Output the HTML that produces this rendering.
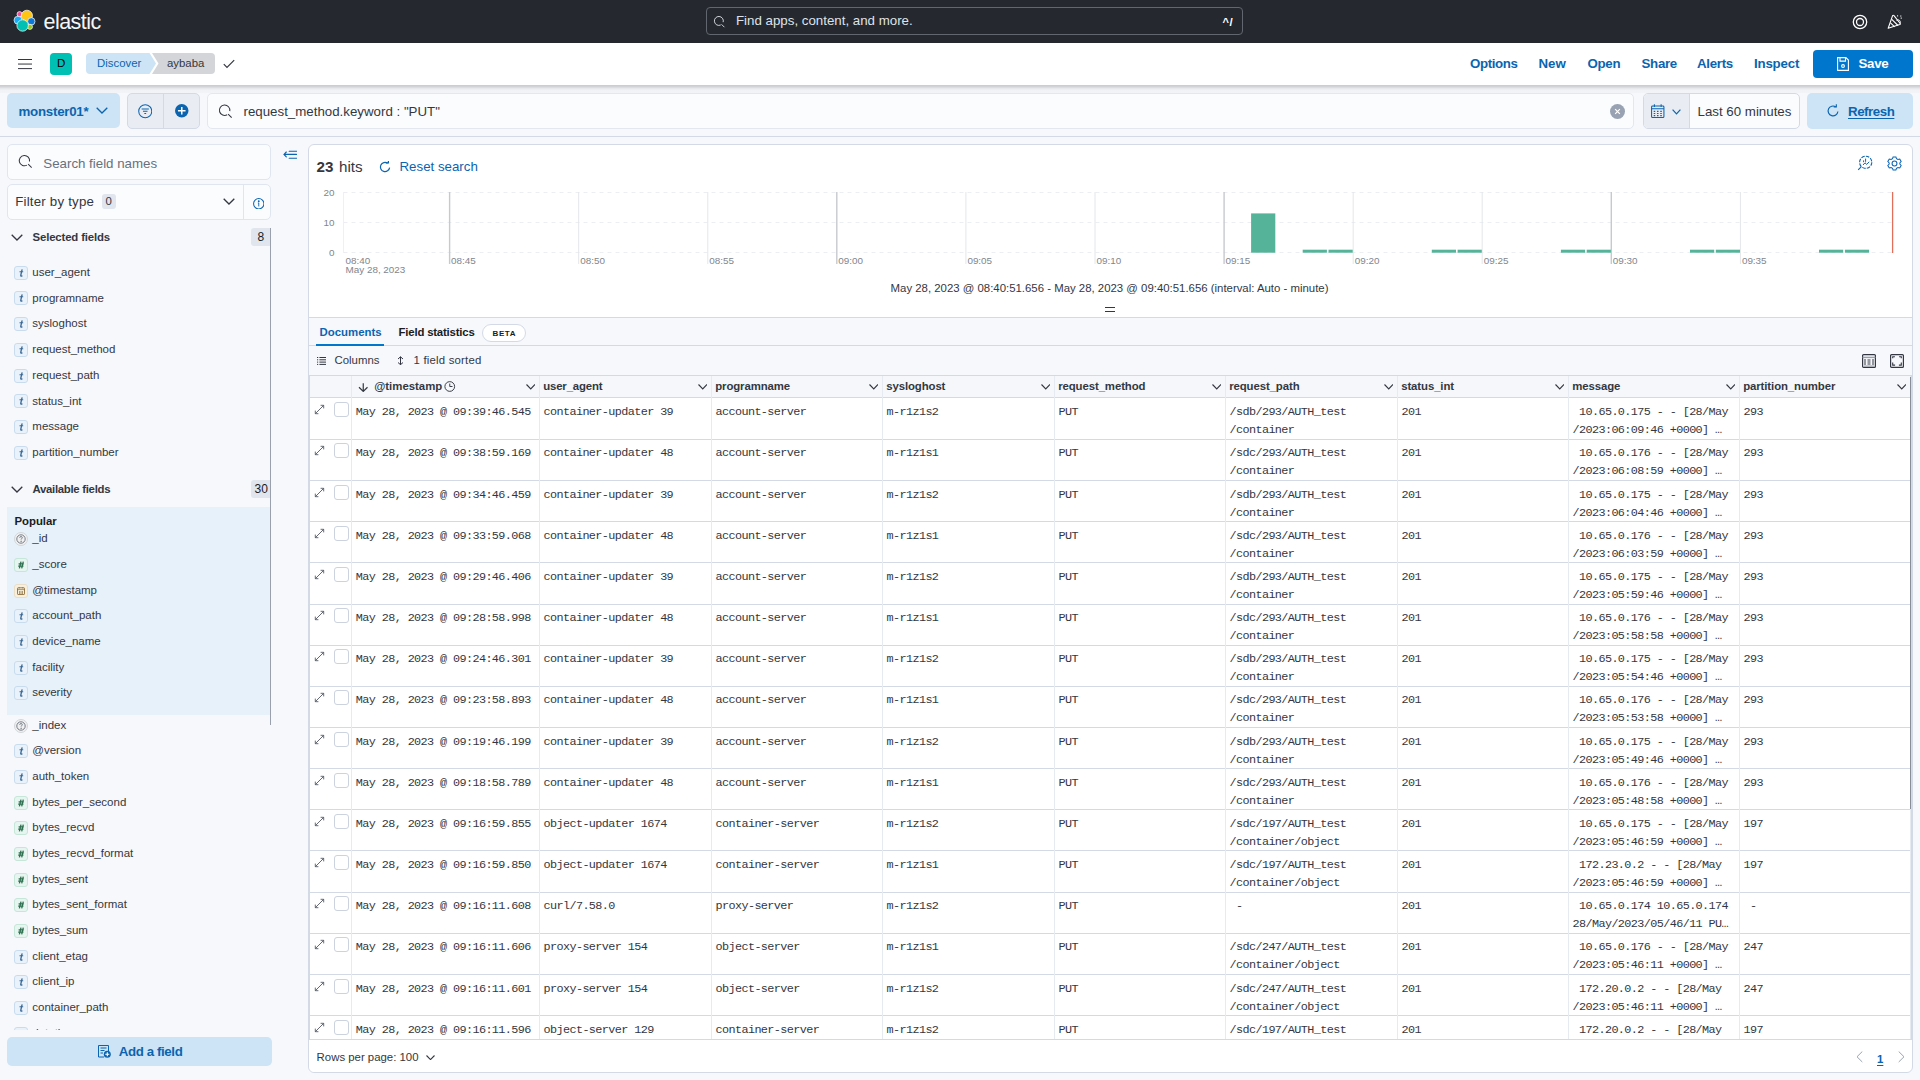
<!DOCTYPE html><html><head><meta charset="utf-8"><style>
*{box-sizing:border-box;margin:0;padding:0}
html,body{width:1920px;height:1080px;overflow:hidden;background:#f7f8fc;font-family:"Liberation Sans",sans-serif;color:#343741}
.a{position:absolute}
.t{line-height:20px;white-space:pre}
.tok{position:absolute;width:14px;height:14px;border-radius:3px;border:1px solid #c9dcee;background:#e9f2fb}
.tokn{border-color:#c5e6d8;background:#e6f5ef}
.toku{border-radius:50%;border-color:#d3d6da;background:#f0f0f0}
.tokd{border-color:#eadfc6;background:#f8f0dc}
</style></head><body>
<div class="a" style="left:0;top:0;width:1920px;height:43px;background:#25282f"></div>
<svg class="a" style="left:13px;top:9px" width="24" height="24" viewBox="0 0 24 24" stroke="#fff" stroke-width=".7">
<circle cx="6.6" cy="5.2" r="2.6" fill="#f04e98"/>
<circle cx="13.9" cy="6.8" r="5.6" fill="#fec514"/>
<circle cx="5" cy="11.2" r="4" fill="#1ba9f5"/>
<circle cx="18.3" cy="12.4" r="3.7" fill="#0b77d6"/>
<circle cx="16.9" cy="17.8" r="2.6" fill="#93c90e"/>
<circle cx="9.6" cy="16.5" r="5.7" fill="#00bfb3"/>
</svg>
<div class="a t" style="left:43.5px;top:12px;font-size:21.5px;color:#f5f6f8;letter-spacing:-0.55px">elastic</div>
<div class="a" style="left:706px;top:7px;width:537px;height:28px;border:1px solid #62666e;border-radius:4px"></div>
<svg class="a" style="left:713px;top:15px" width="13" height="13" viewBox="0 0 16 16" fill="none" stroke="#d4d7dc" stroke-width="1.2"><path d="M9.5 12.3A5.5 5.5 0 1 1 12.5 8.8"/><path d="M10.5 11.5l3.5 3.5"/></svg>
<div class="a t" style="left:736px;top:11px;font-size:13.3px;color:#dfe3e9">Find apps, content, and more.</div>
<div class="a t" style="left:1222.5px;top:12px;font-size:11px;color:#fff;font-weight:bold">^</div>
<div class="a t" style="left:1229.5px;top:12px;font-size:11.5px;color:#fff;font-weight:bold">/</div>
<svg class="a" style="left:1851.5px;top:13.5px" width="16" height="16" viewBox="0 0 16 16" fill="none" stroke="#fff"><circle cx="8" cy="8" r="6.7" stroke-width="1.3"/><circle cx="8" cy="8" r="3.5" stroke-width="1.3"/><path d="M5.6 2.2v2.4M10.4 2.2v2.4M5.6 11.4v2.4M10.4 11.4v2.4" stroke="#25282f" stroke-width="0"/></svg>
<svg class="a" style="left:1887px;top:13.5px" width="16" height="16" viewBox="0 0 16 16" fill="none" stroke="#fff" stroke-width="1.1" stroke-linejoin="round"><path d="M1.2 14.3L5.6 1.6Q6.3.9 7 1.6L13.2 9.5Q13.6 10.3 12.8 10.6Z"/><path d="M3.5 8.8l4.2 4.1M4.8 5.3l6.2 6.2"/><path d="M9.5 6.5Q11.5 5 12.8 6.6Q14 8.2 13 9.6" stroke-width=".9"/><path d="M10.6 1.2v1.3M13.8 1.4v1.3M13.6 4.1h1.4" stroke-width=".9"/></svg>
<div class="a" style="left:0;top:43px;width:1920px;height:42px;background:#fff"></div>
<div class="a" style="left:0;top:85px;width:1920px;height:8px;background:linear-gradient(#c9cdd9 0px,#c9cdd9 1px,#d2d3d6 1px,#d2d3d6 2px,#dcdde1 2px,#dcdde1 3px,#e7e8ec 3px,#e7e8ec 4px,#edeef2 4px,#edeef2 5px,#f1f2f6 5px,#f3f4f8 8px)"></div>
<div class="a" style="left:18px;top:58.8px;width:14px;height:1.6px;background:#343741;box-shadow:0 4.55px 0 #343741,0 9.1px 0 #343741"></div>
<div class="a" style="left:50px;top:53px;width:22px;height:22px;border-radius:4px;background:#00bfb3"></div>
<div class="a t" style="left:57px;top:53px;font-size:11.5px;color:#000">D</div>
<svg class="a" style="left:86px;top:53px" width="130" height="21" viewBox="0 0 130 21">
<path d="M4 0 H63.5 L70 10.5 L63.5 21 H4 Q0 21 0 17 V4 Q0 0 4 0Z" fill="#cce4f5"/>
<path d="M66 0 H125 Q129 0 129 4 V17 Q129 21 125 21 H66 L72.5 10.5Z" fill="#d3d5d8"/>
</svg>
<div class="a t" style="left:97px;top:53px;font-size:11.4px;color:#0b64b0">Discover</div>
<div class="a t" style="left:167px;top:53px;font-size:11.4px;color:#343741">aybaba</div>
<svg class="a" style="left:223px;top:59px" width="12" height="10" viewBox="0 0 12 10"><path d="M.8 5.2L4 8.5 11.2 1.2" fill="none" stroke="#343741" stroke-width="1.2"/></svg>
<div class="a t" style="left:1470px;top:54px;font-size:13.3px;color:#0b64b0;font-weight:bold;letter-spacing:-0.4px">Options</div>
<div class="a t" style="left:1538.5px;top:54px;font-size:13.3px;color:#0b64b0;font-weight:bold">New</div>
<div class="a t" style="left:1587.5px;top:54px;font-size:13.3px;color:#0b64b0;font-weight:bold;letter-spacing:-0.3px">Open</div>
<div class="a t" style="left:1641.5px;top:54px;font-size:13.3px;color:#0b64b0;font-weight:bold;letter-spacing:-0.3px">Share</div>
<div class="a t" style="left:1697px;top:54px;font-size:13.3px;color:#0b64b0;font-weight:bold;letter-spacing:-0.3px">Alerts</div>
<div class="a t" style="left:1754px;top:54px;font-size:13.3px;color:#0b64b0;font-weight:bold;letter-spacing:-0.2px">Inspect</div>
<div class="a" style="left:1813px;top:50px;width:100px;height:28px;border-radius:4px;background:#0077cc"></div>
<svg class="a" style="left:1837px;top:57px" width="12" height="14" viewBox="0 0 12 14" fill="none" stroke="#fff" stroke-width="1.1"><path d="M.6.6h8.3l2.5 2.5v10.3H.6z"/><path d="M3 .6v3.5h5.5V.6"/><circle cx="6" cy="9" r="1.4"/></svg>
<div class="a t" style="left:1858.5px;top:54px;font-size:13.3px;color:#fff;font-weight:bold;letter-spacing:-0.3px">Save</div>
<div class="a" style="left:0;top:136px;width:1920px;height:1px;background:#d3dae6"></div>
<div class="a" style="left:7px;top:93px;width:113px;height:35px;border-radius:5px;background:#cce4f5"></div>
<div class="a t" style="left:18.5px;top:102px;font-size:13.3px;color:#0b64b0;font-weight:bold;letter-spacing:-0.25px">monster01*</div>
<svg class="a" style="left:96px;top:107px" width="12" height="7" viewBox="0 0 12 7"><path d="M.7.7L6 6 11.3.7" fill="none" stroke="#0b64b0" stroke-width="1.3"/></svg>
<div class="a" style="left:127px;top:93px;width:73px;height:35.5px;border-radius:5px;background:#e9edf3;border:1px solid #d3dae6"></div>
<div class="a" style="left:163px;top:94px;width:1px;height:34px;background:#d3dae6"></div>
<svg class="a" style="left:137.5px;top:104px" width="14.5" height="14.5" viewBox="0 0 16 16" fill="none" stroke="#0b64b0" stroke-width="1.15"><circle cx="8" cy="8" r="7.2"/><path d="M4 5.5h8M5.5 8h5M7 10.5h2"/></svg>
<svg class="a" style="left:175px;top:104px" width="13.5" height="13.5" viewBox="0 0 16 16"><circle cx="8" cy="8" r="8" fill="#0b64b0"/><path d="M8 3.5v9M3.5 8h9" stroke="#fff" stroke-width="1.8"/></svg>
<div class="a" style="left:207px;top:93px;width:1427px;height:35.5px;border-radius:5px;background:#fbfcfd;border:1px solid #e3e8f0"></div>
<svg class="a" style="left:217.5px;top:104px" width="15" height="14" viewBox="0 0 16 15" fill="none" stroke="#343741" stroke-width="1.15"><path d="M9.8 11.6A5.6 5.6 0 1 1 12.6 7.6"/><path d="M10.8 10.8l3.8 3.8"/></svg>
<div class="a t" style="left:243.5px;top:102px;font-size:13.3px;color:#343741">request_method.keyword : &quot;PUT&quot;</div>
<svg class="a" style="left:1609.5px;top:103.5px" width="15" height="15" viewBox="0 0 16 16"><circle cx="8" cy="8" r="8" fill="#98a2b3"/><path d="M5.5 5.5l5 5M10.5 5.5l-5 5" stroke="#fff" stroke-width="1.3"/></svg>
<div class="a" style="left:1643px;top:93px;width:157px;height:35.5px;border-radius:5px;background:#fbfcfd;border:1px solid #d3dae6;overflow:hidden"><div style="position:absolute;left:0;top:0;width:46px;height:35px;background:#e9edf3;border-right:1px solid #d3dae6"></div></div>
<svg class="a" style="left:1651px;top:104px" width="13.5" height="14" viewBox="0 0 14 14.5" fill="none" stroke="#0b64b0" stroke-width="1.1"><rect x=".6" y="2" width="12.8" height="12" rx="1"/><path d="M.6 5h12.8M3.5 .2v3M10.5 .2v3"/><path d="M2.8 7.6h1.6M6.2 7.6h1.6M9.6 7.6h1.6M2.8 9.8h1.6M6.2 9.8h1.6M9.6 9.8h1.6M2.8 12h1.6M6.2 12h1.6M9.6 12h1.6" stroke-width="1.2"/></svg>
<svg class="a" style="left:1672px;top:109px" width="9" height="6" viewBox="0 0 9 6"><path d="M.6.6L4.5 4.8 8.4.6" fill="none" stroke="#0b64b0" stroke-width="1.2"/></svg>
<div class="a t" style="left:1697.5px;top:102px;font-size:13.3px;color:#343741">Last 60 minutes</div>
<div class="a" style="left:1807px;top:93px;width:106px;height:35.5px;border-radius:5px;background:#cce4f5"></div>
<svg class="a" style="left:1826px;top:104px" width="14" height="14" viewBox="0 0 16 16" fill="none" stroke="#0b64b0" stroke-width="1.3"><path d="M13.6 8.5A5.6 5.6 0 1 1 11.2 3.3"/><path d="M8.8 3.3h3V0.3"/></svg>
<div class="a t" style="left:1848px;top:102px;font-size:13.3px;color:#0b64b0;font-weight:bold;letter-spacing:-0.45px;text-decoration:underline;text-underline-offset:1.5px">Refresh</div>
<div class="a" style="left:7px;top:144px;width:264px;height:35.5px;border-radius:5px;background:#fbfcfd;border:1px solid #e0e6ef"></div>
<svg class="a" style="left:17.5px;top:154px" width="14.5" height="14.5" viewBox="0 0 16 16" fill="none" stroke="#343741" stroke-width="1.15"><path d="M9.9 12.3A5.7 5.7 0 1 1 12.7 8.3"/><path d="M11.2 11.2l3.9 3.9"/></svg>
<div class="a t" style="left:43.3px;top:154px;font-size:13.3px;color:#69707d">Search field names</div>
<div class="a" style="left:7px;top:184px;width:264px;height:36px;border-radius:5px;background:#fbfcfd;border:1px solid #e0e6ef"></div>
<div class="a" style="left:243px;top:185px;width:1px;height:34px;background:#e0e6ef"></div>
<div class="a t" style="left:15.2px;top:192px;font-size:13.3px;color:#343741;letter-spacing:0.2px">Filter by type</div>
<div class="a" style="left:102px;top:194px;width:14px;height:15px;border-radius:3px;background:#e0e5ee"></div>
<div class="a t" style="left:105.5px;top:191px;font-size:11.4px;color:#343741">0</div>
<svg class="a" style="left:223px;top:198px" width="12" height="7" viewBox="0 0 12 7"><path d="M.7.7L6 6 11.3.7" fill="none" stroke="#343741" stroke-width="1.3"/></svg>
<svg class="a" style="left:252.5px;top:197.5px" width="11.5" height="11.5" viewBox="0 0 12 12" fill="none" stroke="#0b64b0" stroke-width="1.05"><circle cx="6" cy="6" r="5.4"/><path d="M6 5.2v3.6M5.1 5.2H6" stroke-width=".95"/><circle cx="6" cy="3.4" r=".45" fill="#0b64b0"/></svg>
<svg class="a" style="left:11px;top:234.2px" width="12" height="7" viewBox="0 0 12 7"><path d="M.7.7L6 6 11.3.7" fill="none" stroke="#343741" stroke-width="1.3"/></svg>
<div class="a t" style="left:32.5px;top:227px;font-size:11.4px;color:#343741;font-weight:bold;letter-spacing:-0.15px">Selected fields</div>
<div class="a" style="left:251px;top:228.2px;width:20px;height:17.5px;border-radius:3px 0 0 3px;background:#e0e5ee"></div>
<div class="a t" style="left:257.5px;top:227px;font-size:12px;color:#1a1c21">8</div>
<div class="tok" style="left:14px;top:265.7px"></div>
<svg class="a" style="left:14px;top:265.7px" width="14" height="14" viewBox="0 0 14 14" fill="none" stroke="#3b6a98" stroke-linecap="round"><path d="M8 3.9L6.8 9.1Q6.5 10.4 7.9 10" stroke-width="1.35"/><path d="M5.9 5.8h2.9" stroke-width="1.1"/></svg>
<div class="a t" style="left:32.3px;top:262px;font-size:11.5px;color:#343741">user_agent</div>
<div class="tok" style="left:14px;top:291.4px"></div>
<svg class="a" style="left:14px;top:291.4px" width="14" height="14" viewBox="0 0 14 14" fill="none" stroke="#3b6a98" stroke-linecap="round"><path d="M8 3.9L6.8 9.1Q6.5 10.4 7.9 10" stroke-width="1.35"/><path d="M5.9 5.8h2.9" stroke-width="1.1"/></svg>
<div class="a t" style="left:32.3px;top:288px;font-size:11.5px;color:#343741">programname</div>
<div class="tok" style="left:14px;top:317.2px"></div>
<svg class="a" style="left:14px;top:317.2px" width="14" height="14" viewBox="0 0 14 14" fill="none" stroke="#3b6a98" stroke-linecap="round"><path d="M8 3.9L6.8 9.1Q6.5 10.4 7.9 10" stroke-width="1.35"/><path d="M5.9 5.8h2.9" stroke-width="1.1"/></svg>
<div class="a t" style="left:32.3px;top:313px;font-size:11.5px;color:#343741">sysloghost</div>
<div class="tok" style="left:14px;top:342.9px"></div>
<svg class="a" style="left:14px;top:342.9px" width="14" height="14" viewBox="0 0 14 14" fill="none" stroke="#3b6a98" stroke-linecap="round"><path d="M8 3.9L6.8 9.1Q6.5 10.4 7.9 10" stroke-width="1.35"/><path d="M5.9 5.8h2.9" stroke-width="1.1"/></svg>
<div class="a t" style="left:32.3px;top:339px;font-size:11.5px;color:#343741">request_method</div>
<div class="tok" style="left:14px;top:368.7px"></div>
<svg class="a" style="left:14px;top:368.7px" width="14" height="14" viewBox="0 0 14 14" fill="none" stroke="#3b6a98" stroke-linecap="round"><path d="M8 3.9L6.8 9.1Q6.5 10.4 7.9 10" stroke-width="1.35"/><path d="M5.9 5.8h2.9" stroke-width="1.1"/></svg>
<div class="a t" style="left:32.3px;top:365px;font-size:11.5px;color:#343741">request_path</div>
<div class="tok" style="left:14px;top:394.4px"></div>
<svg class="a" style="left:14px;top:394.4px" width="14" height="14" viewBox="0 0 14 14" fill="none" stroke="#3b6a98" stroke-linecap="round"><path d="M8 3.9L6.8 9.1Q6.5 10.4 7.9 10" stroke-width="1.35"/><path d="M5.9 5.8h2.9" stroke-width="1.1"/></svg>
<div class="a t" style="left:32.3px;top:391px;font-size:11.5px;color:#343741">status_int</div>
<div class="tok" style="left:14px;top:420.2px"></div>
<svg class="a" style="left:14px;top:420.2px" width="14" height="14" viewBox="0 0 14 14" fill="none" stroke="#3b6a98" stroke-linecap="round"><path d="M8 3.9L6.8 9.1Q6.5 10.4 7.9 10" stroke-width="1.35"/><path d="M5.9 5.8h2.9" stroke-width="1.1"/></svg>
<div class="a t" style="left:32.3px;top:416px;font-size:11.5px;color:#343741">message</div>
<div class="tok" style="left:14px;top:445.9px"></div>
<svg class="a" style="left:14px;top:445.9px" width="14" height="14" viewBox="0 0 14 14" fill="none" stroke="#3b6a98" stroke-linecap="round"><path d="M8 3.9L6.8 9.1Q6.5 10.4 7.9 10" stroke-width="1.35"/><path d="M5.9 5.8h2.9" stroke-width="1.1"/></svg>
<div class="a t" style="left:32.3px;top:442px;font-size:11.5px;color:#343741">partition_number</div>
<svg class="a" style="left:11px;top:486.4px" width="12" height="7" viewBox="0 0 12 7"><path d="M.7.7L6 6 11.3.7" fill="none" stroke="#343741" stroke-width="1.3"/></svg>
<div class="a t" style="left:32.5px;top:479px;font-size:11.4px;color:#343741;font-weight:bold;letter-spacing:-0.3px">Available fields</div>
<div class="a" style="left:251px;top:480.4px;width:20px;height:17.5px;border-radius:3px 0 0 3px;background:#e0e5ee"></div>
<div class="a t" style="left:254.5px;top:479px;font-size:12px;color:#1a1c21">30</div>
<div class="a" style="left:7.2px;top:507.3px;width:262.8px;height:207.5px;background:#e6f1fa"></div>
<div class="a t" style="left:14.4px;top:511px;font-size:11.4px;color:#1a1c21;font-weight:bold">Popular</div>
<div class="tok toku" style="left:14px;top:532.1px"></div>
<svg class="a" style="left:14px;top:532.1px" width="14" height="14" viewBox="0 0 14 14" fill="none" stroke="#69707d" stroke-width=".9"><circle cx="7" cy="7" r="4.2"/><path d="M5.7 5.8c0-.8.6-1.3 1.3-1.3s1.3.5 1.3 1.2c0 .9-1.2 1-1.2 1.9"/><circle cx="7.1" cy="9.2" r=".3" fill="#69707d"/></svg>
<div class="a t" style="left:32.3px;top:528px;font-size:11.5px;color:#343741">_id</div>
<div class="tok tokn" style="left:14px;top:557.8px"></div>
<svg class="a" style="left:14px;top:557.8px" width="14" height="14" viewBox="0 0 14 14" fill="none" stroke="#2c7050" stroke-width="1.3"><path d="M7 3.6L5.4 10.4M9.3 3.6L7.7 10.4M4.6 5.9h5.2M4.2 8.2h5.2"/></svg>
<div class="a t" style="left:32.3px;top:554px;font-size:11.5px;color:#343741">_score</div>
<div class="tok tokd" style="left:14px;top:583.5px"></div>
<svg class="a" style="left:14px;top:583.5px" width="14" height="14" viewBox="0 0 14 14" fill="none" stroke="#8d6e3c" stroke-width=".9"><rect x="3.5" y="3.8" width="7" height="6.7" rx=".6"/><path d="M3.5 5.6h7M5.2 3v1.5M8.8 3v1.5M5.5 7v3M7 7v3M8.5 7v3" stroke-width=".7"/></svg>
<div class="a t" style="left:32.3px;top:580px;font-size:11.5px;color:#343741">@timestamp</div>
<div class="tok" style="left:14px;top:609.2px"></div>
<svg class="a" style="left:14px;top:609.2px" width="14" height="14" viewBox="0 0 14 14" fill="none" stroke="#3b6a98" stroke-linecap="round"><path d="M8 3.9L6.8 9.1Q6.5 10.4 7.9 10" stroke-width="1.35"/><path d="M5.9 5.8h2.9" stroke-width="1.1"/></svg>
<div class="a t" style="left:32.3px;top:605px;font-size:11.5px;color:#343741">account_path</div>
<div class="tok" style="left:14px;top:634.9px"></div>
<svg class="a" style="left:14px;top:634.9px" width="14" height="14" viewBox="0 0 14 14" fill="none" stroke="#3b6a98" stroke-linecap="round"><path d="M8 3.9L6.8 9.1Q6.5 10.4 7.9 10" stroke-width="1.35"/><path d="M5.9 5.8h2.9" stroke-width="1.1"/></svg>
<div class="a t" style="left:32.3px;top:631px;font-size:11.5px;color:#343741">device_name</div>
<div class="tok" style="left:14px;top:660.6px"></div>
<svg class="a" style="left:14px;top:660.6px" width="14" height="14" viewBox="0 0 14 14" fill="none" stroke="#3b6a98" stroke-linecap="round"><path d="M8 3.9L6.8 9.1Q6.5 10.4 7.9 10" stroke-width="1.35"/><path d="M5.9 5.8h2.9" stroke-width="1.1"/></svg>
<div class="a t" style="left:32.3px;top:657px;font-size:11.5px;color:#343741">facility</div>
<div class="tok" style="left:14px;top:686.3px"></div>
<svg class="a" style="left:14px;top:686.3px" width="14" height="14" viewBox="0 0 14 14" fill="none" stroke="#3b6a98" stroke-linecap="round"><path d="M8 3.9L6.8 9.1Q6.5 10.4 7.9 10" stroke-width="1.35"/><path d="M5.9 5.8h2.9" stroke-width="1.1"/></svg>
<div class="a t" style="left:32.3px;top:682px;font-size:11.5px;color:#343741">severity</div>
<div class="tok toku" style="left:14px;top:718.7px"></div>
<svg class="a" style="left:14px;top:718.7px" width="14" height="14" viewBox="0 0 14 14" fill="none" stroke="#69707d" stroke-width=".9"><circle cx="7" cy="7" r="4.2"/><path d="M5.7 5.8c0-.8.6-1.3 1.3-1.3s1.3.5 1.3 1.2c0 .9-1.2 1-1.2 1.9"/><circle cx="7.1" cy="9.2" r=".3" fill="#69707d"/></svg>
<div class="a t" style="left:32.3px;top:715px;font-size:11.5px;color:#343741">_index</div>
<div class="tok" style="left:14px;top:744.3px"></div>
<svg class="a" style="left:14px;top:744.3px" width="14" height="14" viewBox="0 0 14 14" fill="none" stroke="#3b6a98" stroke-linecap="round"><path d="M8 3.9L6.8 9.1Q6.5 10.4 7.9 10" stroke-width="1.35"/><path d="M5.9 5.8h2.9" stroke-width="1.1"/></svg>
<div class="a t" style="left:32.3px;top:740px;font-size:11.5px;color:#343741">@version</div>
<div class="tok" style="left:14px;top:770.0px"></div>
<svg class="a" style="left:14px;top:770.0px" width="14" height="14" viewBox="0 0 14 14" fill="none" stroke="#3b6a98" stroke-linecap="round"><path d="M8 3.9L6.8 9.1Q6.5 10.4 7.9 10" stroke-width="1.35"/><path d="M5.9 5.8h2.9" stroke-width="1.1"/></svg>
<div class="a t" style="left:32.3px;top:766px;font-size:11.5px;color:#343741">auth_token</div>
<div class="tok tokn" style="left:14px;top:795.6px"></div>
<svg class="a" style="left:14px;top:795.6px" width="14" height="14" viewBox="0 0 14 14" fill="none" stroke="#2c7050" stroke-width="1.3"><path d="M7 3.6L5.4 10.4M9.3 3.6L7.7 10.4M4.6 5.9h5.2M4.2 8.2h5.2"/></svg>
<div class="a t" style="left:32.3px;top:792px;font-size:11.5px;color:#343741">bytes_per_second</div>
<div class="tok tokn" style="left:14px;top:821.3px"></div>
<svg class="a" style="left:14px;top:821.3px" width="14" height="14" viewBox="0 0 14 14" fill="none" stroke="#2c7050" stroke-width="1.3"><path d="M7 3.6L5.4 10.4M9.3 3.6L7.7 10.4M4.6 5.9h5.2M4.2 8.2h5.2"/></svg>
<div class="a t" style="left:32.3px;top:817px;font-size:11.5px;color:#343741">bytes_recvd</div>
<div class="tok tokn" style="left:14px;top:846.9px"></div>
<svg class="a" style="left:14px;top:846.9px" width="14" height="14" viewBox="0 0 14 14" fill="none" stroke="#2c7050" stroke-width="1.3"><path d="M7 3.6L5.4 10.4M9.3 3.6L7.7 10.4M4.6 5.9h5.2M4.2 8.2h5.2"/></svg>
<div class="a t" style="left:32.3px;top:843px;font-size:11.5px;color:#343741">bytes_recvd_format</div>
<div class="tok tokn" style="left:14px;top:872.6px"></div>
<svg class="a" style="left:14px;top:872.6px" width="14" height="14" viewBox="0 0 14 14" fill="none" stroke="#2c7050" stroke-width="1.3"><path d="M7 3.6L5.4 10.4M9.3 3.6L7.7 10.4M4.6 5.9h5.2M4.2 8.2h5.2"/></svg>
<div class="a t" style="left:32.3px;top:869px;font-size:11.5px;color:#343741">bytes_sent</div>
<div class="tok tokn" style="left:14px;top:898.2px"></div>
<svg class="a" style="left:14px;top:898.2px" width="14" height="14" viewBox="0 0 14 14" fill="none" stroke="#2c7050" stroke-width="1.3"><path d="M7 3.6L5.4 10.4M9.3 3.6L7.7 10.4M4.6 5.9h5.2M4.2 8.2h5.2"/></svg>
<div class="a t" style="left:32.3px;top:894px;font-size:11.5px;color:#343741">bytes_sent_format</div>
<div class="tok tokn" style="left:14px;top:923.9px"></div>
<svg class="a" style="left:14px;top:923.9px" width="14" height="14" viewBox="0 0 14 14" fill="none" stroke="#2c7050" stroke-width="1.3"><path d="M7 3.6L5.4 10.4M9.3 3.6L7.7 10.4M4.6 5.9h5.2M4.2 8.2h5.2"/></svg>
<div class="a t" style="left:32.3px;top:920px;font-size:11.5px;color:#343741">bytes_sum</div>
<div class="tok" style="left:14px;top:949.5px"></div>
<svg class="a" style="left:14px;top:949.5px" width="14" height="14" viewBox="0 0 14 14" fill="none" stroke="#3b6a98" stroke-linecap="round"><path d="M8 3.9L6.8 9.1Q6.5 10.4 7.9 10" stroke-width="1.35"/><path d="M5.9 5.8h2.9" stroke-width="1.1"/></svg>
<div class="a t" style="left:32.3px;top:946px;font-size:11.5px;color:#343741">client_etag</div>
<div class="tok" style="left:14px;top:975.2px"></div>
<svg class="a" style="left:14px;top:975.2px" width="14" height="14" viewBox="0 0 14 14" fill="none" stroke="#3b6a98" stroke-linecap="round"><path d="M8 3.9L6.8 9.1Q6.5 10.4 7.9 10" stroke-width="1.35"/><path d="M5.9 5.8h2.9" stroke-width="1.1"/></svg>
<div class="a t" style="left:32.3px;top:971px;font-size:11.5px;color:#343741">client_ip</div>
<div class="tok" style="left:14px;top:1000.8px"></div>
<svg class="a" style="left:14px;top:1000.8px" width="14" height="14" viewBox="0 0 14 14" fill="none" stroke="#3b6a98" stroke-linecap="round"><path d="M8 3.9L6.8 9.1Q6.5 10.4 7.9 10" stroke-width="1.35"/><path d="M5.9 5.8h2.9" stroke-width="1.1"/></svg>
<div class="a t" style="left:32.3px;top:997px;font-size:11.5px;color:#343741">container_path</div>
<div class="tok" style="left:14px;top:1026.5px"></div>
<svg class="a" style="left:14px;top:1026.5px" width="14" height="14" viewBox="0 0 14 14" fill="none" stroke="#3b6a98" stroke-linecap="round"><path d="M8 3.9L6.8 9.1Q6.5 10.4 7.9 10" stroke-width="1.35"/><path d="M5.9 5.8h2.9" stroke-width="1.1"/></svg>
<div class="a t" style="left:32.3px;top:1023px;font-size:11.5px;color:#343741">datetime</div>
<div class="a" style="left:270px;top:228px;width:1px;height:497px;background:#9aa1ac"></div>
<div class="a" style="left:0;top:1030px;width:300px;height:50px;background:#f7f8fc"></div>
<div class="a" style="left:7.2px;top:1037.2px;width:264.5px;height:28.5px;border-radius:5px;background:#cce4f5"></div>
<svg class="a" style="left:98px;top:1045px" width="13" height="13" viewBox="0 0 13 13"><path d="M.5.5h10v5.5M.5.5v11.5h5.5" fill="none" stroke="#0b64b0" stroke-width="1"/><path d="M2.5 3h6M2.5 5.5h4M2.5 8h2.5" stroke="#0b64b0" stroke-width="1.1"/><circle cx="9.3" cy="9.3" r="3.5" fill="#0b64b0"/><path d="M9.3 7.3v4M7.3 9.3h4" stroke="#fff" stroke-width="1.1"/></svg>
<div class="a t" style="left:118.8px;top:1042px;font-size:13.3px;color:#0b64b0;font-weight:bold;letter-spacing:-0.4px">Add a field</div>
<svg class="a" style="left:283px;top:150px" width="14" height="10" viewBox="0 0 14 10" fill="none" stroke="#0b64b0" stroke-width="1.15" stroke-linecap="round"><path d="M3.3 2L1 4.4l2.3 2.4M1 4.4h12.5M6.2 1.2h7.3M6.2 8.2h7.3"/></svg>
<div class="a" style="left:308px;top:144px;width:1605px;height:929px;border:1px solid #d3dae6;border-radius:6px;background:#fff"></div>
<div class="a t" style="left:316.5px;top:157px;font-size:15.2px;color:#343741;font-weight:bold">23</div>
<div class="a t" style="left:339px;top:157px;font-size:15.2px;color:#343741">hits</div>
<svg class="a" style="left:378.5px;top:161px" width="12" height="12" viewBox="0 0 12 12" fill="none" stroke="#0b64b0" stroke-width="1.2"><path d="M10.6 6.6A4.6 4.6 0 1 1 8.6 2.2"/><path d="M6.8 1.8h2.6V-.8"/></svg>
<div class="a t" style="left:399.5px;top:157px;font-size:13.3px;color:#0b64b0">Reset search</div>
<svg class="a" style="left:1857px;top:155px" width="16" height="16" viewBox="0 0 16 16" fill="none" stroke="#0b64b0" stroke-width="1.1"><circle cx="8.7" cy="7.3" r="6.1" stroke-dasharray="3.5 1.2"/><path d="M4.3 11.7L1.2 14.8"/><path d="M6 10l2-2.2 1.7 1.6 2.5-2.6M6.6 7.2V5.4M8.6 6.8V3.6" stroke-width="1"/></svg>
<svg class="a" style="left:1886.5px;top:155.5px" width="15" height="15" viewBox="0 0 16 16" fill="none" stroke="#0b64b0" stroke-width="1.1"><circle cx="8" cy="8" r="2.6"/><path d="M6.5 1h3l.6 1.9 1.6.9 1.9-.5 1.5 2.6-1.4 1.4v1.4l1.4 1.4-1.5 2.6-1.9-.5-1.6.9L9.5 15h-3l-.6-1.9-1.6-.9-1.9.5L.9 10.1l1.4-1.4V7.3L.9 5.9l1.5-2.6 1.9.5 1.6-.9z"/></svg>
<svg class="a" style="left:0;top:0" width="1920" height="300" viewBox="0 0 1920 300" font-family="Liberation Sans"><line x1="343.5" y1="192.5" x2="1893" y2="192.5" stroke="#eceef1" stroke-width="1" stroke-dasharray="4 4"/><line x1="343.5" y1="222.5" x2="1893" y2="222.5" stroke="#eceef1" stroke-width="1" stroke-dasharray="4 4"/><line x1="343.5" y1="252.5" x2="1893" y2="252.5" stroke="#eceef1" stroke-width="1" stroke-dasharray="4 4"/><line x1="343.5" y1="192" x2="343.5" y2="253" stroke="#eef0f3" stroke-width="1"/><line x1="449.6" y1="192" x2="449.6" y2="264" stroke="#c6c9ce" stroke-width="1.4"/><text x="451.1" y="264.2" font-size="9.9" fill="#81868e">08:45</text><line x1="578.7" y1="192" x2="578.7" y2="264" stroke="#e4e6e9" stroke-width="1"/><text x="580.2" y="264.2" font-size="9.9" fill="#81868e">08:50</text><line x1="707.8" y1="192" x2="707.8" y2="264" stroke="#e4e6e9" stroke-width="1"/><text x="709.3" y="264.2" font-size="9.9" fill="#81868e">08:55</text><line x1="836.8" y1="192" x2="836.8" y2="264" stroke="#c6c9ce" stroke-width="1.4"/><text x="838.3" y="264.2" font-size="9.9" fill="#81868e">09:00</text><line x1="965.9" y1="192" x2="965.9" y2="264" stroke="#e4e6e9" stroke-width="1"/><text x="967.4" y="264.2" font-size="9.9" fill="#81868e">09:05</text><line x1="1095.0" y1="192" x2="1095.0" y2="264" stroke="#e4e6e9" stroke-width="1"/><text x="1096.5" y="264.2" font-size="9.9" fill="#81868e">09:10</text><line x1="1224.1" y1="192" x2="1224.1" y2="264" stroke="#c6c9ce" stroke-width="1.4"/><text x="1225.6" y="264.2" font-size="9.9" fill="#81868e">09:15</text><line x1="1353.2" y1="192" x2="1353.2" y2="264" stroke="#e4e6e9" stroke-width="1"/><text x="1354.7" y="264.2" font-size="9.9" fill="#81868e">09:20</text><line x1="1482.2" y1="192" x2="1482.2" y2="264" stroke="#e4e6e9" stroke-width="1"/><text x="1483.7" y="264.2" font-size="9.9" fill="#81868e">09:25</text><line x1="1611.3" y1="192" x2="1611.3" y2="264" stroke="#c6c9ce" stroke-width="1.4"/><text x="1612.8" y="264.2" font-size="9.9" fill="#81868e">09:30</text><line x1="1740.4" y1="192" x2="1740.4" y2="264" stroke="#e4e6e9" stroke-width="1"/><text x="1741.9" y="264.2" font-size="9.9" fill="#81868e">09:35</text><text x="345.5" y="264.2" font-size="9.9" fill="#81868e">08:40</text><text x="345.5" y="273" font-size="9.9" fill="#81868e">May 28, 2023</text><text x="334.5" y="195.5" text-anchor="end" font-size="9.9" fill="#81868e">20</text><text x="334.5" y="225.7" text-anchor="end" font-size="9.9" fill="#81868e">10</text><text x="334.5" y="256.2" text-anchor="end" font-size="9.9" fill="#81868e">0</text><rect x="1251.1" y="213.4" width="24.2" height="39.3" fill="#54b399"/><rect x="1302.7" y="249.7" width="24.2" height="3.0" fill="#54b399"/><rect x="1328.5" y="249.7" width="24.2" height="3.0" fill="#54b399"/><rect x="1431.8" y="249.7" width="24.2" height="3.0" fill="#54b399"/><rect x="1457.6" y="249.7" width="24.2" height="3.0" fill="#54b399"/><rect x="1560.9" y="249.7" width="24.2" height="3.0" fill="#54b399"/><rect x="1586.7" y="249.7" width="24.2" height="3.0" fill="#54b399"/><rect x="1690.0" y="249.7" width="24.2" height="3.0" fill="#54b399"/><rect x="1715.8" y="249.7" width="24.2" height="3.0" fill="#54b399"/><rect x="1819.0" y="249.7" width="24.2" height="3.0" fill="#54b399"/><rect x="1844.9" y="249.7" width="24.2" height="3.0" fill="#54b399"/><line x1="1892.6" y1="192" x2="1892.6" y2="253" stroke="#e0705a" stroke-width="1.3"/></svg>
<div class="a t" style="left:890.6px;top:278px;font-size:11.4px;color:#343741">May 28, 2023 @ 08:40:51.656 - May 28, 2023 @ 09:40:51.656 (interval: Auto - minute)</div>
<div class="a" style="left:1105px;top:307px;width:10px;height:1.2px;background:#343741;box-shadow:0 4px 0 #343741"></div>
<div class="a" style="left:309px;top:317px;width:1603px;height:58px;background:#f7f8fc;border-top:1px solid #d3dae6"></div>
<div class="a" style="left:309px;top:345px;width:1603px;height:1px;background:#d3dae6"></div>
<div class="a" style="left:316px;top:344px;width:68px;height:2px;background:#0077cc"></div>
<div class="a t" style="left:319.6px;top:322px;font-size:11.4px;color:#0b64b0;font-weight:bold">Documents</div>
<div class="a t" style="left:398.6px;top:322px;font-size:11.4px;color:#1a1c21;font-weight:bold;letter-spacing:-0.2px">Field statistics</div>
<div class="a" style="left:481.7px;top:324.4px;width:44.3px;height:17.5px;border:1px solid #d3dae6;border-radius:9px;background:#fff"></div>
<div class="a t" style="left:492.5px;top:324px;font-size:8px;color:#1a1c21;font-weight:bold;letter-spacing:0.6px">BETA</div>
<svg class="a" style="left:317px;top:356.5px" width="9" height="8" viewBox="0 0 9 8" fill="#343741"><rect x="0" y="0" width="1.2" height="1"/><rect x="2.4" y="0" width="6.6" height="1"/><rect x="0" y="2.3" width="1.2" height="1"/><rect x="2.4" y="2.3" width="6.6" height="1"/><rect x="0" y="4.6" width="1.2" height="1"/><rect x="2.4" y="4.6" width="6.6" height="1"/><rect x="0" y="6.9" width="1.2" height="1"/><rect x="2.4" y="6.9" width="6.6" height="1"/></svg>
<div class="a t" style="left:334.5px;top:350px;font-size:11.4px;color:#343741">Columns</div>
<svg class="a" style="left:396.5px;top:355.5px" width="7" height="9.5" viewBox="0 0 7 9.5" fill="none" stroke="#343741" stroke-width="1"><path d="M3.5.8v8M1 3L3.5.8 6 3M1 6.5l2.5 2.2L6 6.5"/></svg>
<div class="a t" style="left:413.5px;top:350px;font-size:11.4px;color:#343741;letter-spacing:0.2px">1 field sorted</div>
<svg class="a" style="left:1862px;top:354px" width="14" height="14" viewBox="0 0 14 14" fill="none" stroke="#343741"><rect x=".6" y=".6" width="12.8" height="12.8" rx="1" stroke-width="1.2"/><path d="M.6 3.4h12.8" stroke="#9aa0a8" stroke-width="1.4"/><path d="M2 6h2M5.5 6h3M10 6h2M2 8h2M5.5 8h3M10 8h2M2 10h2M5.5 10h3M10 10h2" stroke-width="1"/><path d="M2 12h10" stroke="#9aa0a8"/></svg>
<svg class="a" style="left:1890px;top:354px" width="14" height="14" viewBox="0 0 14 14" fill="none" stroke="#343741"><rect x=".6" y=".6" width="12.8" height="12.8" rx="1" stroke-width="1.2"/><path d="M2.7 4.3V2.7h2.2M9.1 2.7h2.2v1.6M11.3 8.5v2.6H8.9M5.1 11.1H2.7V8.5" stroke-width="1.1"/></svg>
<div class="a" style="left:309px;top:375px;width:1603px;height:23px;background:#f5f7fa;border-top:1px solid #d3dae6;border-bottom:1px solid #d3dae6"></div>
<div class="a" style="left:309.5px;top:439.0px;width:1601.0px;height:1px;background:#d3dae6"></div>
<svg class="a" style="left:314px;top:404.0px" width="11" height="11" viewBox="0 0 11 11" fill="none" stroke="#535966" stroke-width=".9"><path d="M1.3 9.7L9.7 1.3M6.6 1.3h3.1v3.1M1.3 6.6v3.1h3.1"/></svg>
<div class="a" style="left:334px;top:402.2px;width:14.5px;height:14.5px;border:1px solid #ccd3de;border-radius:3px;background:#fff"></div>
<div class="a t" style="left:355.8px;top:402px;font-size:11.8px;color:#343741;letter-spacing:-0.6px;font-family:Liberation Mono,monospace">May 28, 2023 @ 09:39:46.545</div>
<div class="a t" style="left:543.5px;top:402px;font-size:11.8px;color:#343741;letter-spacing:-0.6px;font-family:Liberation Mono,monospace">container-updater 39</div>
<div class="a t" style="left:715.5px;top:402px;font-size:11.8px;color:#343741;letter-spacing:-0.6px;font-family:Liberation Mono,monospace">account-server</div>
<div class="a t" style="left:886.5px;top:402px;font-size:11.8px;color:#343741;letter-spacing:-0.6px;font-family:Liberation Mono,monospace">m-r1z1s2</div>
<div class="a t" style="left:1058.5px;top:402px;font-size:11.8px;color:#343741;letter-spacing:-0.6px;font-family:Liberation Mono,monospace">PUT</div>
<div class="a t" style="left:1229.5px;top:402px;font-size:11.8px;color:#343741;letter-spacing:-0.6px;font-family:Liberation Mono,monospace">/sdb/293/AUTH_test</div>
<div class="a t" style="left:1229.5px;top:420px;font-size:11.8px;color:#343741;letter-spacing:-0.6px;font-family:Liberation Mono,monospace">/container</div>
<div class="a t" style="left:1401.5px;top:402px;font-size:11.8px;color:#343741;letter-spacing:-0.6px;font-family:Liberation Mono,monospace">201</div>
<div class="a t" style="left:1572.5px;top:402px;font-size:11.8px;color:#343741;letter-spacing:-0.6px;font-family:Liberation Mono,monospace"> 10.65.0.175 - - [28/May</div>
<div class="a t" style="left:1572.5px;top:420px;font-size:11.8px;color:#343741;letter-spacing:-0.6px;font-family:Liberation Mono,monospace">/2023:06:09:46 +0000] …</div>
<div class="a t" style="left:1743.5px;top:402px;font-size:11.8px;color:#343741;letter-spacing:-0.6px;font-family:Liberation Mono,monospace">293</div>
<div class="a" style="left:309.5px;top:480.0px;width:1601.0px;height:1px;background:#d3dae6"></div>
<svg class="a" style="left:314px;top:445.0px" width="11" height="11" viewBox="0 0 11 11" fill="none" stroke="#535966" stroke-width=".9"><path d="M1.3 9.7L9.7 1.3M6.6 1.3h3.1v3.1M1.3 6.6v3.1h3.1"/></svg>
<div class="a" style="left:334px;top:443.2px;width:14.5px;height:14.5px;border:1px solid #ccd3de;border-radius:3px;background:#fff"></div>
<div class="a t" style="left:355.8px;top:443px;font-size:11.8px;color:#343741;letter-spacing:-0.6px;font-family:Liberation Mono,monospace">May 28, 2023 @ 09:38:59.169</div>
<div class="a t" style="left:543.5px;top:443px;font-size:11.8px;color:#343741;letter-spacing:-0.6px;font-family:Liberation Mono,monospace">container-updater 48</div>
<div class="a t" style="left:715.5px;top:443px;font-size:11.8px;color:#343741;letter-spacing:-0.6px;font-family:Liberation Mono,monospace">account-server</div>
<div class="a t" style="left:886.5px;top:443px;font-size:11.8px;color:#343741;letter-spacing:-0.6px;font-family:Liberation Mono,monospace">m-r1z1s1</div>
<div class="a t" style="left:1058.5px;top:443px;font-size:11.8px;color:#343741;letter-spacing:-0.6px;font-family:Liberation Mono,monospace">PUT</div>
<div class="a t" style="left:1229.5px;top:443px;font-size:11.8px;color:#343741;letter-spacing:-0.6px;font-family:Liberation Mono,monospace">/sdc/293/AUTH_test</div>
<div class="a t" style="left:1229.5px;top:461px;font-size:11.8px;color:#343741;letter-spacing:-0.6px;font-family:Liberation Mono,monospace">/container</div>
<div class="a t" style="left:1401.5px;top:443px;font-size:11.8px;color:#343741;letter-spacing:-0.6px;font-family:Liberation Mono,monospace">201</div>
<div class="a t" style="left:1572.5px;top:443px;font-size:11.8px;color:#343741;letter-spacing:-0.6px;font-family:Liberation Mono,monospace"> 10.65.0.176 - - [28/May</div>
<div class="a t" style="left:1572.5px;top:461px;font-size:11.8px;color:#343741;letter-spacing:-0.6px;font-family:Liberation Mono,monospace">/2023:06:08:59 +0000] …</div>
<div class="a t" style="left:1743.5px;top:443px;font-size:11.8px;color:#343741;letter-spacing:-0.6px;font-family:Liberation Mono,monospace">293</div>
<div class="a" style="left:309.5px;top:521.0px;width:1601.0px;height:1px;background:#d3dae6"></div>
<svg class="a" style="left:314px;top:487.0px" width="11" height="11" viewBox="0 0 11 11" fill="none" stroke="#535966" stroke-width=".9"><path d="M1.3 9.7L9.7 1.3M6.6 1.3h3.1v3.1M1.3 6.6v3.1h3.1"/></svg>
<div class="a" style="left:334px;top:485.2px;width:14.5px;height:14.5px;border:1px solid #ccd3de;border-radius:3px;background:#fff"></div>
<div class="a t" style="left:355.8px;top:485px;font-size:11.8px;color:#343741;letter-spacing:-0.6px;font-family:Liberation Mono,monospace">May 28, 2023 @ 09:34:46.459</div>
<div class="a t" style="left:543.5px;top:485px;font-size:11.8px;color:#343741;letter-spacing:-0.6px;font-family:Liberation Mono,monospace">container-updater 39</div>
<div class="a t" style="left:715.5px;top:485px;font-size:11.8px;color:#343741;letter-spacing:-0.6px;font-family:Liberation Mono,monospace">account-server</div>
<div class="a t" style="left:886.5px;top:485px;font-size:11.8px;color:#343741;letter-spacing:-0.6px;font-family:Liberation Mono,monospace">m-r1z1s2</div>
<div class="a t" style="left:1058.5px;top:485px;font-size:11.8px;color:#343741;letter-spacing:-0.6px;font-family:Liberation Mono,monospace">PUT</div>
<div class="a t" style="left:1229.5px;top:485px;font-size:11.8px;color:#343741;letter-spacing:-0.6px;font-family:Liberation Mono,monospace">/sdb/293/AUTH_test</div>
<div class="a t" style="left:1229.5px;top:503px;font-size:11.8px;color:#343741;letter-spacing:-0.6px;font-family:Liberation Mono,monospace">/container</div>
<div class="a t" style="left:1401.5px;top:485px;font-size:11.8px;color:#343741;letter-spacing:-0.6px;font-family:Liberation Mono,monospace">201</div>
<div class="a t" style="left:1572.5px;top:485px;font-size:11.8px;color:#343741;letter-spacing:-0.6px;font-family:Liberation Mono,monospace"> 10.65.0.175 - - [28/May</div>
<div class="a t" style="left:1572.5px;top:503px;font-size:11.8px;color:#343741;letter-spacing:-0.6px;font-family:Liberation Mono,monospace">/2023:06:04:46 +0000] …</div>
<div class="a t" style="left:1743.5px;top:485px;font-size:11.8px;color:#343741;letter-spacing:-0.6px;font-family:Liberation Mono,monospace">293</div>
<div class="a" style="left:309.5px;top:562.0px;width:1601.0px;height:1px;background:#d3dae6"></div>
<svg class="a" style="left:314px;top:528.0px" width="11" height="11" viewBox="0 0 11 11" fill="none" stroke="#535966" stroke-width=".9"><path d="M1.3 9.7L9.7 1.3M6.6 1.3h3.1v3.1M1.3 6.6v3.1h3.1"/></svg>
<div class="a" style="left:334px;top:526.2px;width:14.5px;height:14.5px;border:1px solid #ccd3de;border-radius:3px;background:#fff"></div>
<div class="a t" style="left:355.8px;top:526px;font-size:11.8px;color:#343741;letter-spacing:-0.6px;font-family:Liberation Mono,monospace">May 28, 2023 @ 09:33:59.068</div>
<div class="a t" style="left:543.5px;top:526px;font-size:11.8px;color:#343741;letter-spacing:-0.6px;font-family:Liberation Mono,monospace">container-updater 48</div>
<div class="a t" style="left:715.5px;top:526px;font-size:11.8px;color:#343741;letter-spacing:-0.6px;font-family:Liberation Mono,monospace">account-server</div>
<div class="a t" style="left:886.5px;top:526px;font-size:11.8px;color:#343741;letter-spacing:-0.6px;font-family:Liberation Mono,monospace">m-r1z1s1</div>
<div class="a t" style="left:1058.5px;top:526px;font-size:11.8px;color:#343741;letter-spacing:-0.6px;font-family:Liberation Mono,monospace">PUT</div>
<div class="a t" style="left:1229.5px;top:526px;font-size:11.8px;color:#343741;letter-spacing:-0.6px;font-family:Liberation Mono,monospace">/sdc/293/AUTH_test</div>
<div class="a t" style="left:1229.5px;top:544px;font-size:11.8px;color:#343741;letter-spacing:-0.6px;font-family:Liberation Mono,monospace">/container</div>
<div class="a t" style="left:1401.5px;top:526px;font-size:11.8px;color:#343741;letter-spacing:-0.6px;font-family:Liberation Mono,monospace">201</div>
<div class="a t" style="left:1572.5px;top:526px;font-size:11.8px;color:#343741;letter-spacing:-0.6px;font-family:Liberation Mono,monospace"> 10.65.0.176 - - [28/May</div>
<div class="a t" style="left:1572.5px;top:544px;font-size:11.8px;color:#343741;letter-spacing:-0.6px;font-family:Liberation Mono,monospace">/2023:06:03:59 +0000] …</div>
<div class="a t" style="left:1743.5px;top:526px;font-size:11.8px;color:#343741;letter-spacing:-0.6px;font-family:Liberation Mono,monospace">293</div>
<div class="a" style="left:309.5px;top:604.0px;width:1601.0px;height:1px;background:#d3dae6"></div>
<svg class="a" style="left:314px;top:569.0px" width="11" height="11" viewBox="0 0 11 11" fill="none" stroke="#535966" stroke-width=".9"><path d="M1.3 9.7L9.7 1.3M6.6 1.3h3.1v3.1M1.3 6.6v3.1h3.1"/></svg>
<div class="a" style="left:334px;top:567.2px;width:14.5px;height:14.5px;border:1px solid #ccd3de;border-radius:3px;background:#fff"></div>
<div class="a t" style="left:355.8px;top:567px;font-size:11.8px;color:#343741;letter-spacing:-0.6px;font-family:Liberation Mono,monospace">May 28, 2023 @ 09:29:46.406</div>
<div class="a t" style="left:543.5px;top:567px;font-size:11.8px;color:#343741;letter-spacing:-0.6px;font-family:Liberation Mono,monospace">container-updater 39</div>
<div class="a t" style="left:715.5px;top:567px;font-size:11.8px;color:#343741;letter-spacing:-0.6px;font-family:Liberation Mono,monospace">account-server</div>
<div class="a t" style="left:886.5px;top:567px;font-size:11.8px;color:#343741;letter-spacing:-0.6px;font-family:Liberation Mono,monospace">m-r1z1s2</div>
<div class="a t" style="left:1058.5px;top:567px;font-size:11.8px;color:#343741;letter-spacing:-0.6px;font-family:Liberation Mono,monospace">PUT</div>
<div class="a t" style="left:1229.5px;top:567px;font-size:11.8px;color:#343741;letter-spacing:-0.6px;font-family:Liberation Mono,monospace">/sdb/293/AUTH_test</div>
<div class="a t" style="left:1229.5px;top:585px;font-size:11.8px;color:#343741;letter-spacing:-0.6px;font-family:Liberation Mono,monospace">/container</div>
<div class="a t" style="left:1401.5px;top:567px;font-size:11.8px;color:#343741;letter-spacing:-0.6px;font-family:Liberation Mono,monospace">201</div>
<div class="a t" style="left:1572.5px;top:567px;font-size:11.8px;color:#343741;letter-spacing:-0.6px;font-family:Liberation Mono,monospace"> 10.65.0.175 - - [28/May</div>
<div class="a t" style="left:1572.5px;top:585px;font-size:11.8px;color:#343741;letter-spacing:-0.6px;font-family:Liberation Mono,monospace">/2023:05:59:46 +0000] …</div>
<div class="a t" style="left:1743.5px;top:567px;font-size:11.8px;color:#343741;letter-spacing:-0.6px;font-family:Liberation Mono,monospace">293</div>
<div class="a" style="left:309.5px;top:645.0px;width:1601.0px;height:1px;background:#d3dae6"></div>
<svg class="a" style="left:314px;top:610.0px" width="11" height="11" viewBox="0 0 11 11" fill="none" stroke="#535966" stroke-width=".9"><path d="M1.3 9.7L9.7 1.3M6.6 1.3h3.1v3.1M1.3 6.6v3.1h3.1"/></svg>
<div class="a" style="left:334px;top:608.2px;width:14.5px;height:14.5px;border:1px solid #ccd3de;border-radius:3px;background:#fff"></div>
<div class="a t" style="left:355.8px;top:608px;font-size:11.8px;color:#343741;letter-spacing:-0.6px;font-family:Liberation Mono,monospace">May 28, 2023 @ 09:28:58.998</div>
<div class="a t" style="left:543.5px;top:608px;font-size:11.8px;color:#343741;letter-spacing:-0.6px;font-family:Liberation Mono,monospace">container-updater 48</div>
<div class="a t" style="left:715.5px;top:608px;font-size:11.8px;color:#343741;letter-spacing:-0.6px;font-family:Liberation Mono,monospace">account-server</div>
<div class="a t" style="left:886.5px;top:608px;font-size:11.8px;color:#343741;letter-spacing:-0.6px;font-family:Liberation Mono,monospace">m-r1z1s1</div>
<div class="a t" style="left:1058.5px;top:608px;font-size:11.8px;color:#343741;letter-spacing:-0.6px;font-family:Liberation Mono,monospace">PUT</div>
<div class="a t" style="left:1229.5px;top:608px;font-size:11.8px;color:#343741;letter-spacing:-0.6px;font-family:Liberation Mono,monospace">/sdc/293/AUTH_test</div>
<div class="a t" style="left:1229.5px;top:626px;font-size:11.8px;color:#343741;letter-spacing:-0.6px;font-family:Liberation Mono,monospace">/container</div>
<div class="a t" style="left:1401.5px;top:608px;font-size:11.8px;color:#343741;letter-spacing:-0.6px;font-family:Liberation Mono,monospace">201</div>
<div class="a t" style="left:1572.5px;top:608px;font-size:11.8px;color:#343741;letter-spacing:-0.6px;font-family:Liberation Mono,monospace"> 10.65.0.176 - - [28/May</div>
<div class="a t" style="left:1572.5px;top:626px;font-size:11.8px;color:#343741;letter-spacing:-0.6px;font-family:Liberation Mono,monospace">/2023:05:58:58 +0000] …</div>
<div class="a t" style="left:1743.5px;top:608px;font-size:11.8px;color:#343741;letter-spacing:-0.6px;font-family:Liberation Mono,monospace">293</div>
<div class="a" style="left:309.5px;top:686.0px;width:1601.0px;height:1px;background:#d3dae6"></div>
<svg class="a" style="left:314px;top:651.0px" width="11" height="11" viewBox="0 0 11 11" fill="none" stroke="#535966" stroke-width=".9"><path d="M1.3 9.7L9.7 1.3M6.6 1.3h3.1v3.1M1.3 6.6v3.1h3.1"/></svg>
<div class="a" style="left:334px;top:649.2px;width:14.5px;height:14.5px;border:1px solid #ccd3de;border-radius:3px;background:#fff"></div>
<div class="a t" style="left:355.8px;top:649px;font-size:11.8px;color:#343741;letter-spacing:-0.6px;font-family:Liberation Mono,monospace">May 28, 2023 @ 09:24:46.301</div>
<div class="a t" style="left:543.5px;top:649px;font-size:11.8px;color:#343741;letter-spacing:-0.6px;font-family:Liberation Mono,monospace">container-updater 39</div>
<div class="a t" style="left:715.5px;top:649px;font-size:11.8px;color:#343741;letter-spacing:-0.6px;font-family:Liberation Mono,monospace">account-server</div>
<div class="a t" style="left:886.5px;top:649px;font-size:11.8px;color:#343741;letter-spacing:-0.6px;font-family:Liberation Mono,monospace">m-r1z1s2</div>
<div class="a t" style="left:1058.5px;top:649px;font-size:11.8px;color:#343741;letter-spacing:-0.6px;font-family:Liberation Mono,monospace">PUT</div>
<div class="a t" style="left:1229.5px;top:649px;font-size:11.8px;color:#343741;letter-spacing:-0.6px;font-family:Liberation Mono,monospace">/sdb/293/AUTH_test</div>
<div class="a t" style="left:1229.5px;top:667px;font-size:11.8px;color:#343741;letter-spacing:-0.6px;font-family:Liberation Mono,monospace">/container</div>
<div class="a t" style="left:1401.5px;top:649px;font-size:11.8px;color:#343741;letter-spacing:-0.6px;font-family:Liberation Mono,monospace">201</div>
<div class="a t" style="left:1572.5px;top:649px;font-size:11.8px;color:#343741;letter-spacing:-0.6px;font-family:Liberation Mono,monospace"> 10.65.0.175 - - [28/May</div>
<div class="a t" style="left:1572.5px;top:667px;font-size:11.8px;color:#343741;letter-spacing:-0.6px;font-family:Liberation Mono,monospace">/2023:05:54:46 +0000] …</div>
<div class="a t" style="left:1743.5px;top:649px;font-size:11.8px;color:#343741;letter-spacing:-0.6px;font-family:Liberation Mono,monospace">293</div>
<div class="a" style="left:309.5px;top:727.0px;width:1601.0px;height:1px;background:#d3dae6"></div>
<svg class="a" style="left:314px;top:692.0px" width="11" height="11" viewBox="0 0 11 11" fill="none" stroke="#535966" stroke-width=".9"><path d="M1.3 9.7L9.7 1.3M6.6 1.3h3.1v3.1M1.3 6.6v3.1h3.1"/></svg>
<div class="a" style="left:334px;top:690.2px;width:14.5px;height:14.5px;border:1px solid #ccd3de;border-radius:3px;background:#fff"></div>
<div class="a t" style="left:355.8px;top:690px;font-size:11.8px;color:#343741;letter-spacing:-0.6px;font-family:Liberation Mono,monospace">May 28, 2023 @ 09:23:58.893</div>
<div class="a t" style="left:543.5px;top:690px;font-size:11.8px;color:#343741;letter-spacing:-0.6px;font-family:Liberation Mono,monospace">container-updater 48</div>
<div class="a t" style="left:715.5px;top:690px;font-size:11.8px;color:#343741;letter-spacing:-0.6px;font-family:Liberation Mono,monospace">account-server</div>
<div class="a t" style="left:886.5px;top:690px;font-size:11.8px;color:#343741;letter-spacing:-0.6px;font-family:Liberation Mono,monospace">m-r1z1s1</div>
<div class="a t" style="left:1058.5px;top:690px;font-size:11.8px;color:#343741;letter-spacing:-0.6px;font-family:Liberation Mono,monospace">PUT</div>
<div class="a t" style="left:1229.5px;top:690px;font-size:11.8px;color:#343741;letter-spacing:-0.6px;font-family:Liberation Mono,monospace">/sdc/293/AUTH_test</div>
<div class="a t" style="left:1229.5px;top:708px;font-size:11.8px;color:#343741;letter-spacing:-0.6px;font-family:Liberation Mono,monospace">/container</div>
<div class="a t" style="left:1401.5px;top:690px;font-size:11.8px;color:#343741;letter-spacing:-0.6px;font-family:Liberation Mono,monospace">201</div>
<div class="a t" style="left:1572.5px;top:690px;font-size:11.8px;color:#343741;letter-spacing:-0.6px;font-family:Liberation Mono,monospace"> 10.65.0.176 - - [28/May</div>
<div class="a t" style="left:1572.5px;top:708px;font-size:11.8px;color:#343741;letter-spacing:-0.6px;font-family:Liberation Mono,monospace">/2023:05:53:58 +0000] …</div>
<div class="a t" style="left:1743.5px;top:690px;font-size:11.8px;color:#343741;letter-spacing:-0.6px;font-family:Liberation Mono,monospace">293</div>
<div class="a" style="left:309.5px;top:768.0px;width:1601.0px;height:1px;background:#d3dae6"></div>
<svg class="a" style="left:314px;top:734.0px" width="11" height="11" viewBox="0 0 11 11" fill="none" stroke="#535966" stroke-width=".9"><path d="M1.3 9.7L9.7 1.3M6.6 1.3h3.1v3.1M1.3 6.6v3.1h3.1"/></svg>
<div class="a" style="left:334px;top:732.2px;width:14.5px;height:14.5px;border:1px solid #ccd3de;border-radius:3px;background:#fff"></div>
<div class="a t" style="left:355.8px;top:732px;font-size:11.8px;color:#343741;letter-spacing:-0.6px;font-family:Liberation Mono,monospace">May 28, 2023 @ 09:19:46.199</div>
<div class="a t" style="left:543.5px;top:732px;font-size:11.8px;color:#343741;letter-spacing:-0.6px;font-family:Liberation Mono,monospace">container-updater 39</div>
<div class="a t" style="left:715.5px;top:732px;font-size:11.8px;color:#343741;letter-spacing:-0.6px;font-family:Liberation Mono,monospace">account-server</div>
<div class="a t" style="left:886.5px;top:732px;font-size:11.8px;color:#343741;letter-spacing:-0.6px;font-family:Liberation Mono,monospace">m-r1z1s2</div>
<div class="a t" style="left:1058.5px;top:732px;font-size:11.8px;color:#343741;letter-spacing:-0.6px;font-family:Liberation Mono,monospace">PUT</div>
<div class="a t" style="left:1229.5px;top:732px;font-size:11.8px;color:#343741;letter-spacing:-0.6px;font-family:Liberation Mono,monospace">/sdb/293/AUTH_test</div>
<div class="a t" style="left:1229.5px;top:750px;font-size:11.8px;color:#343741;letter-spacing:-0.6px;font-family:Liberation Mono,monospace">/container</div>
<div class="a t" style="left:1401.5px;top:732px;font-size:11.8px;color:#343741;letter-spacing:-0.6px;font-family:Liberation Mono,monospace">201</div>
<div class="a t" style="left:1572.5px;top:732px;font-size:11.8px;color:#343741;letter-spacing:-0.6px;font-family:Liberation Mono,monospace"> 10.65.0.175 - - [28/May</div>
<div class="a t" style="left:1572.5px;top:750px;font-size:11.8px;color:#343741;letter-spacing:-0.6px;font-family:Liberation Mono,monospace">/2023:05:49:46 +0000] …</div>
<div class="a t" style="left:1743.5px;top:732px;font-size:11.8px;color:#343741;letter-spacing:-0.6px;font-family:Liberation Mono,monospace">293</div>
<div class="a" style="left:309.5px;top:809.0px;width:1601.0px;height:1px;background:#d3dae6"></div>
<svg class="a" style="left:314px;top:775.0px" width="11" height="11" viewBox="0 0 11 11" fill="none" stroke="#535966" stroke-width=".9"><path d="M1.3 9.7L9.7 1.3M6.6 1.3h3.1v3.1M1.3 6.6v3.1h3.1"/></svg>
<div class="a" style="left:334px;top:773.2px;width:14.5px;height:14.5px;border:1px solid #ccd3de;border-radius:3px;background:#fff"></div>
<div class="a t" style="left:355.8px;top:773px;font-size:11.8px;color:#343741;letter-spacing:-0.6px;font-family:Liberation Mono,monospace">May 28, 2023 @ 09:18:58.789</div>
<div class="a t" style="left:543.5px;top:773px;font-size:11.8px;color:#343741;letter-spacing:-0.6px;font-family:Liberation Mono,monospace">container-updater 48</div>
<div class="a t" style="left:715.5px;top:773px;font-size:11.8px;color:#343741;letter-spacing:-0.6px;font-family:Liberation Mono,monospace">account-server</div>
<div class="a t" style="left:886.5px;top:773px;font-size:11.8px;color:#343741;letter-spacing:-0.6px;font-family:Liberation Mono,monospace">m-r1z1s1</div>
<div class="a t" style="left:1058.5px;top:773px;font-size:11.8px;color:#343741;letter-spacing:-0.6px;font-family:Liberation Mono,monospace">PUT</div>
<div class="a t" style="left:1229.5px;top:773px;font-size:11.8px;color:#343741;letter-spacing:-0.6px;font-family:Liberation Mono,monospace">/sdc/293/AUTH_test</div>
<div class="a t" style="left:1229.5px;top:791px;font-size:11.8px;color:#343741;letter-spacing:-0.6px;font-family:Liberation Mono,monospace">/container</div>
<div class="a t" style="left:1401.5px;top:773px;font-size:11.8px;color:#343741;letter-spacing:-0.6px;font-family:Liberation Mono,monospace">201</div>
<div class="a t" style="left:1572.5px;top:773px;font-size:11.8px;color:#343741;letter-spacing:-0.6px;font-family:Liberation Mono,monospace"> 10.65.0.176 - - [28/May</div>
<div class="a t" style="left:1572.5px;top:791px;font-size:11.8px;color:#343741;letter-spacing:-0.6px;font-family:Liberation Mono,monospace">/2023:05:48:58 +0000] …</div>
<div class="a t" style="left:1743.5px;top:773px;font-size:11.8px;color:#343741;letter-spacing:-0.6px;font-family:Liberation Mono,monospace">293</div>
<div class="a" style="left:309.5px;top:850.0px;width:1601.0px;height:1px;background:#d3dae6"></div>
<svg class="a" style="left:314px;top:816.0px" width="11" height="11" viewBox="0 0 11 11" fill="none" stroke="#535966" stroke-width=".9"><path d="M1.3 9.7L9.7 1.3M6.6 1.3h3.1v3.1M1.3 6.6v3.1h3.1"/></svg>
<div class="a" style="left:334px;top:814.2px;width:14.5px;height:14.5px;border:1px solid #ccd3de;border-radius:3px;background:#fff"></div>
<div class="a t" style="left:355.8px;top:814px;font-size:11.8px;color:#343741;letter-spacing:-0.6px;font-family:Liberation Mono,monospace">May 28, 2023 @ 09:16:59.855</div>
<div class="a t" style="left:543.5px;top:814px;font-size:11.8px;color:#343741;letter-spacing:-0.6px;font-family:Liberation Mono,monospace">object-updater 1674</div>
<div class="a t" style="left:715.5px;top:814px;font-size:11.8px;color:#343741;letter-spacing:-0.6px;font-family:Liberation Mono,monospace">container-server</div>
<div class="a t" style="left:886.5px;top:814px;font-size:11.8px;color:#343741;letter-spacing:-0.6px;font-family:Liberation Mono,monospace">m-r1z1s2</div>
<div class="a t" style="left:1058.5px;top:814px;font-size:11.8px;color:#343741;letter-spacing:-0.6px;font-family:Liberation Mono,monospace">PUT</div>
<div class="a t" style="left:1229.5px;top:814px;font-size:11.8px;color:#343741;letter-spacing:-0.6px;font-family:Liberation Mono,monospace">/sdc/197/AUTH_test</div>
<div class="a t" style="left:1229.5px;top:832px;font-size:11.8px;color:#343741;letter-spacing:-0.6px;font-family:Liberation Mono,monospace">/container/object</div>
<div class="a t" style="left:1401.5px;top:814px;font-size:11.8px;color:#343741;letter-spacing:-0.6px;font-family:Liberation Mono,monospace">201</div>
<div class="a t" style="left:1572.5px;top:814px;font-size:11.8px;color:#343741;letter-spacing:-0.6px;font-family:Liberation Mono,monospace"> 10.65.0.175 - - [28/May</div>
<div class="a t" style="left:1572.5px;top:832px;font-size:11.8px;color:#343741;letter-spacing:-0.6px;font-family:Liberation Mono,monospace">/2023:05:46:59 +0000] …</div>
<div class="a t" style="left:1743.5px;top:814px;font-size:11.8px;color:#343741;letter-spacing:-0.6px;font-family:Liberation Mono,monospace">197</div>
<div class="a" style="left:309.5px;top:892.0px;width:1601.0px;height:1px;background:#d3dae6"></div>
<svg class="a" style="left:314px;top:857.0px" width="11" height="11" viewBox="0 0 11 11" fill="none" stroke="#535966" stroke-width=".9"><path d="M1.3 9.7L9.7 1.3M6.6 1.3h3.1v3.1M1.3 6.6v3.1h3.1"/></svg>
<div class="a" style="left:334px;top:855.2px;width:14.5px;height:14.5px;border:1px solid #ccd3de;border-radius:3px;background:#fff"></div>
<div class="a t" style="left:355.8px;top:855px;font-size:11.8px;color:#343741;letter-spacing:-0.6px;font-family:Liberation Mono,monospace">May 28, 2023 @ 09:16:59.850</div>
<div class="a t" style="left:543.5px;top:855px;font-size:11.8px;color:#343741;letter-spacing:-0.6px;font-family:Liberation Mono,monospace">object-updater 1674</div>
<div class="a t" style="left:715.5px;top:855px;font-size:11.8px;color:#343741;letter-spacing:-0.6px;font-family:Liberation Mono,monospace">container-server</div>
<div class="a t" style="left:886.5px;top:855px;font-size:11.8px;color:#343741;letter-spacing:-0.6px;font-family:Liberation Mono,monospace">m-r1z1s1</div>
<div class="a t" style="left:1058.5px;top:855px;font-size:11.8px;color:#343741;letter-spacing:-0.6px;font-family:Liberation Mono,monospace">PUT</div>
<div class="a t" style="left:1229.5px;top:855px;font-size:11.8px;color:#343741;letter-spacing:-0.6px;font-family:Liberation Mono,monospace">/sdc/197/AUTH_test</div>
<div class="a t" style="left:1229.5px;top:873px;font-size:11.8px;color:#343741;letter-spacing:-0.6px;font-family:Liberation Mono,monospace">/container/object</div>
<div class="a t" style="left:1401.5px;top:855px;font-size:11.8px;color:#343741;letter-spacing:-0.6px;font-family:Liberation Mono,monospace">201</div>
<div class="a t" style="left:1572.5px;top:855px;font-size:11.8px;color:#343741;letter-spacing:-0.6px;font-family:Liberation Mono,monospace"> 172.23.0.2 - - [28/May</div>
<div class="a t" style="left:1572.5px;top:873px;font-size:11.8px;color:#343741;letter-spacing:-0.6px;font-family:Liberation Mono,monospace">/2023:05:46:59 +0000] …</div>
<div class="a t" style="left:1743.5px;top:855px;font-size:11.8px;color:#343741;letter-spacing:-0.6px;font-family:Liberation Mono,monospace">197</div>
<div class="a" style="left:309.5px;top:933.0px;width:1601.0px;height:1px;background:#d3dae6"></div>
<svg class="a" style="left:314px;top:898.0px" width="11" height="11" viewBox="0 0 11 11" fill="none" stroke="#535966" stroke-width=".9"><path d="M1.3 9.7L9.7 1.3M6.6 1.3h3.1v3.1M1.3 6.6v3.1h3.1"/></svg>
<div class="a" style="left:334px;top:896.2px;width:14.5px;height:14.5px;border:1px solid #ccd3de;border-radius:3px;background:#fff"></div>
<div class="a t" style="left:355.8px;top:896px;font-size:11.8px;color:#343741;letter-spacing:-0.6px;font-family:Liberation Mono,monospace">May 28, 2023 @ 09:16:11.608</div>
<div class="a t" style="left:543.5px;top:896px;font-size:11.8px;color:#343741;letter-spacing:-0.6px;font-family:Liberation Mono,monospace">curl/7.58.0</div>
<div class="a t" style="left:715.5px;top:896px;font-size:11.8px;color:#343741;letter-spacing:-0.6px;font-family:Liberation Mono,monospace">proxy-server</div>
<div class="a t" style="left:886.5px;top:896px;font-size:11.8px;color:#343741;letter-spacing:-0.6px;font-family:Liberation Mono,monospace">m-r1z1s2</div>
<div class="a t" style="left:1058.5px;top:896px;font-size:11.8px;color:#343741;letter-spacing:-0.6px;font-family:Liberation Mono,monospace">PUT</div>
<div class="a t" style="left:1229.5px;top:896px;font-size:11.8px;color:#343741;letter-spacing:-0.6px;font-family:Liberation Mono,monospace"> -</div>
<div class="a t" style="left:1401.5px;top:896px;font-size:11.8px;color:#343741;letter-spacing:-0.6px;font-family:Liberation Mono,monospace">201</div>
<div class="a t" style="left:1572.5px;top:896px;font-size:11.8px;color:#343741;letter-spacing:-0.6px;font-family:Liberation Mono,monospace"> 10.65.0.174 10.65.0.174</div>
<div class="a t" style="left:1572.5px;top:914px;font-size:11.8px;color:#343741;letter-spacing:-0.6px;font-family:Liberation Mono,monospace">28/May/2023/05/46/11 PU…</div>
<div class="a t" style="left:1743.5px;top:896px;font-size:11.8px;color:#343741;letter-spacing:-0.6px;font-family:Liberation Mono,monospace"> -</div>
<div class="a" style="left:309.5px;top:974.0px;width:1601.0px;height:1px;background:#d3dae6"></div>
<svg class="a" style="left:314px;top:939.0px" width="11" height="11" viewBox="0 0 11 11" fill="none" stroke="#535966" stroke-width=".9"><path d="M1.3 9.7L9.7 1.3M6.6 1.3h3.1v3.1M1.3 6.6v3.1h3.1"/></svg>
<div class="a" style="left:334px;top:937.2px;width:14.5px;height:14.5px;border:1px solid #ccd3de;border-radius:3px;background:#fff"></div>
<div class="a t" style="left:355.8px;top:937px;font-size:11.8px;color:#343741;letter-spacing:-0.6px;font-family:Liberation Mono,monospace">May 28, 2023 @ 09:16:11.606</div>
<div class="a t" style="left:543.5px;top:937px;font-size:11.8px;color:#343741;letter-spacing:-0.6px;font-family:Liberation Mono,monospace">proxy-server 154</div>
<div class="a t" style="left:715.5px;top:937px;font-size:11.8px;color:#343741;letter-spacing:-0.6px;font-family:Liberation Mono,monospace">object-server</div>
<div class="a t" style="left:886.5px;top:937px;font-size:11.8px;color:#343741;letter-spacing:-0.6px;font-family:Liberation Mono,monospace">m-r1z1s1</div>
<div class="a t" style="left:1058.5px;top:937px;font-size:11.8px;color:#343741;letter-spacing:-0.6px;font-family:Liberation Mono,monospace">PUT</div>
<div class="a t" style="left:1229.5px;top:937px;font-size:11.8px;color:#343741;letter-spacing:-0.6px;font-family:Liberation Mono,monospace">/sdc/247/AUTH_test</div>
<div class="a t" style="left:1229.5px;top:955px;font-size:11.8px;color:#343741;letter-spacing:-0.6px;font-family:Liberation Mono,monospace">/container/object</div>
<div class="a t" style="left:1401.5px;top:937px;font-size:11.8px;color:#343741;letter-spacing:-0.6px;font-family:Liberation Mono,monospace">201</div>
<div class="a t" style="left:1572.5px;top:937px;font-size:11.8px;color:#343741;letter-spacing:-0.6px;font-family:Liberation Mono,monospace"> 10.65.0.176 - - [28/May</div>
<div class="a t" style="left:1572.5px;top:955px;font-size:11.8px;color:#343741;letter-spacing:-0.6px;font-family:Liberation Mono,monospace">/2023:05:46:11 +0000] …</div>
<div class="a t" style="left:1743.5px;top:937px;font-size:11.8px;color:#343741;letter-spacing:-0.6px;font-family:Liberation Mono,monospace">247</div>
<div class="a" style="left:309.5px;top:1015.0px;width:1601.0px;height:1px;background:#d3dae6"></div>
<svg class="a" style="left:314px;top:981.0px" width="11" height="11" viewBox="0 0 11 11" fill="none" stroke="#535966" stroke-width=".9"><path d="M1.3 9.7L9.7 1.3M6.6 1.3h3.1v3.1M1.3 6.6v3.1h3.1"/></svg>
<div class="a" style="left:334px;top:979.2px;width:14.5px;height:14.5px;border:1px solid #ccd3de;border-radius:3px;background:#fff"></div>
<div class="a t" style="left:355.8px;top:979px;font-size:11.8px;color:#343741;letter-spacing:-0.6px;font-family:Liberation Mono,monospace">May 28, 2023 @ 09:16:11.601</div>
<div class="a t" style="left:543.5px;top:979px;font-size:11.8px;color:#343741;letter-spacing:-0.6px;font-family:Liberation Mono,monospace">proxy-server 154</div>
<div class="a t" style="left:715.5px;top:979px;font-size:11.8px;color:#343741;letter-spacing:-0.6px;font-family:Liberation Mono,monospace">object-server</div>
<div class="a t" style="left:886.5px;top:979px;font-size:11.8px;color:#343741;letter-spacing:-0.6px;font-family:Liberation Mono,monospace">m-r1z1s2</div>
<div class="a t" style="left:1058.5px;top:979px;font-size:11.8px;color:#343741;letter-spacing:-0.6px;font-family:Liberation Mono,monospace">PUT</div>
<div class="a t" style="left:1229.5px;top:979px;font-size:11.8px;color:#343741;letter-spacing:-0.6px;font-family:Liberation Mono,monospace">/sdc/247/AUTH_test</div>
<div class="a t" style="left:1229.5px;top:997px;font-size:11.8px;color:#343741;letter-spacing:-0.6px;font-family:Liberation Mono,monospace">/container/object</div>
<div class="a t" style="left:1401.5px;top:979px;font-size:11.8px;color:#343741;letter-spacing:-0.6px;font-family:Liberation Mono,monospace">201</div>
<div class="a t" style="left:1572.5px;top:979px;font-size:11.8px;color:#343741;letter-spacing:-0.6px;font-family:Liberation Mono,monospace"> 172.20.0.2 - - [28/May</div>
<div class="a t" style="left:1572.5px;top:997px;font-size:11.8px;color:#343741;letter-spacing:-0.6px;font-family:Liberation Mono,monospace">/2023:05:46:11 +0000] …</div>
<div class="a t" style="left:1743.5px;top:979px;font-size:11.8px;color:#343741;letter-spacing:-0.6px;font-family:Liberation Mono,monospace">247</div>
<svg class="a" style="left:314px;top:1022.0px" width="11" height="11" viewBox="0 0 11 11" fill="none" stroke="#535966" stroke-width=".9"><path d="M1.3 9.7L9.7 1.3M6.6 1.3h3.1v3.1M1.3 6.6v3.1h3.1"/></svg>
<div class="a" style="left:334px;top:1020.2px;width:14.5px;height:14.5px;border:1px solid #ccd3de;border-radius:3px;background:#fff"></div>
<div class="a t" style="left:355.8px;top:1020px;font-size:11.8px;color:#343741;letter-spacing:-0.6px;font-family:Liberation Mono,monospace">May 28, 2023 @ 09:16:11.596</div>
<div class="a t" style="left:543.5px;top:1020px;font-size:11.8px;color:#343741;letter-spacing:-0.6px;font-family:Liberation Mono,monospace">object-server 129</div>
<div class="a t" style="left:715.5px;top:1020px;font-size:11.8px;color:#343741;letter-spacing:-0.6px;font-family:Liberation Mono,monospace">container-server</div>
<div class="a t" style="left:886.5px;top:1020px;font-size:11.8px;color:#343741;letter-spacing:-0.6px;font-family:Liberation Mono,monospace">m-r1z1s2</div>
<div class="a t" style="left:1058.5px;top:1020px;font-size:11.8px;color:#343741;letter-spacing:-0.6px;font-family:Liberation Mono,monospace">PUT</div>
<div class="a t" style="left:1229.5px;top:1020px;font-size:11.8px;color:#343741;letter-spacing:-0.6px;font-family:Liberation Mono,monospace">/sdc/197/AUTH_test</div>
<div class="a t" style="left:1401.5px;top:1020px;font-size:11.8px;color:#343741;letter-spacing:-0.6px;font-family:Liberation Mono,monospace">201</div>
<div class="a t" style="left:1572.5px;top:1020px;font-size:11.8px;color:#343741;letter-spacing:-0.6px;font-family:Liberation Mono,monospace"> 172.20.0.2 - - [28/May</div>
<div class="a t" style="left:1743.5px;top:1020px;font-size:11.8px;color:#343741;letter-spacing:-0.6px;font-family:Liberation Mono,monospace">197</div>
<div class="a" style="left:351px;top:376px;width:1px;height:663px;background:#e6eaf1"></div>
<div class="a" style="left:539px;top:376px;width:1px;height:663px;background:#e6eaf1"></div>
<div class="a" style="left:711px;top:376px;width:1px;height:663px;background:#e6eaf1"></div>
<div class="a" style="left:882px;top:376px;width:1px;height:663px;background:#e6eaf1"></div>
<div class="a" style="left:1054px;top:376px;width:1px;height:663px;background:#e6eaf1"></div>
<div class="a" style="left:1225px;top:376px;width:1px;height:663px;background:#e6eaf1"></div>
<div class="a" style="left:1397px;top:376px;width:1px;height:663px;background:#e6eaf1"></div>
<div class="a" style="left:1568px;top:376px;width:1px;height:663px;background:#e6eaf1"></div>
<div class="a" style="left:1739px;top:376px;width:1px;height:663px;background:#e6eaf1"></div>
<div class="a" style="left:1910px;top:376px;width:1px;height:663px;background:#e6eaf1"></div>
<div class="a" style="left:309px;top:375px;width:1px;height:665px;background:#d3dae6"></div>
<div class="a" style="left:1910.5px;top:375px;width:1.5px;height:665px;background:#d3dae6"></div>
<div class="a" style="left:1910px;top:377px;width:1px;height:432px;background:#878e99"></div>
<svg class="a" style="left:357.5px;top:383px" width="10.5" height="9" viewBox="0 0 10.5 9" fill="none" stroke="#343741" stroke-width="1.2"><path d="M5.25 .3v8M1 4.2l4.25 4.2 4.25-4.2"/></svg>
<div class="a t" style="left:374.2px;top:376px;font-size:11.4px;color:#343741;font-weight:bold">@timestamp</div>
<svg class="a" style="left:444px;top:381.2px" width="11.5" height="11" viewBox="0 0 12 12" fill="none" stroke="#343741" stroke-width="1.05"><circle cx="6" cy="6" r="5.3"/><path d="M6 2.8V6h3"/></svg>
<div class="a t" style="left:543.2px;top:376px;font-size:11.4px;color:#343741;font-weight:bold;letter-spacing:-0.15px">user_agent</div>
<div class="a t" style="left:715.2px;top:376px;font-size:11.4px;color:#343741;font-weight:bold;letter-spacing:-0.1px">programname</div>
<div class="a t" style="left:886.2px;top:376px;font-size:11.4px;color:#343741;font-weight:bold;letter-spacing:-0.1px">sysloghost</div>
<div class="a t" style="left:1058.2px;top:376px;font-size:11.4px;color:#343741;font-weight:bold;letter-spacing:-0.1px">request_method</div>
<div class="a t" style="left:1229.2px;top:376px;font-size:11.4px;color:#343741;font-weight:bold;letter-spacing:-0.1px">request_path</div>
<div class="a t" style="left:1401.2px;top:376px;font-size:11.4px;color:#343741;font-weight:bold;letter-spacing:-0.1px">status_int</div>
<div class="a t" style="left:1572.2px;top:376px;font-size:11.4px;color:#343741;font-weight:bold;letter-spacing:-0.1px">message</div>
<div class="a t" style="left:1743.2px;top:376px;font-size:11.4px;color:#343741;font-weight:bold;letter-spacing:-0.1px">partition_number</div>
<svg class="a" style="left:525.5px;top:384px" width="9.5" height="5.5" viewBox="0 0 9.5 5.5"><path d="M.5.5L4.75 4.9 9 .5" fill="none" stroke="#343741" stroke-width="1.1"/></svg>
<svg class="a" style="left:697.5px;top:384px" width="9.5" height="5.5" viewBox="0 0 9.5 5.5"><path d="M.5.5L4.75 4.9 9 .5" fill="none" stroke="#343741" stroke-width="1.1"/></svg>
<svg class="a" style="left:868.5px;top:384px" width="9.5" height="5.5" viewBox="0 0 9.5 5.5"><path d="M.5.5L4.75 4.9 9 .5" fill="none" stroke="#343741" stroke-width="1.1"/></svg>
<svg class="a" style="left:1040.5px;top:384px" width="9.5" height="5.5" viewBox="0 0 9.5 5.5"><path d="M.5.5L4.75 4.9 9 .5" fill="none" stroke="#343741" stroke-width="1.1"/></svg>
<svg class="a" style="left:1211.5px;top:384px" width="9.5" height="5.5" viewBox="0 0 9.5 5.5"><path d="M.5.5L4.75 4.9 9 .5" fill="none" stroke="#343741" stroke-width="1.1"/></svg>
<svg class="a" style="left:1383.5px;top:384px" width="9.5" height="5.5" viewBox="0 0 9.5 5.5"><path d="M.5.5L4.75 4.9 9 .5" fill="none" stroke="#343741" stroke-width="1.1"/></svg>
<svg class="a" style="left:1554.5px;top:384px" width="9.5" height="5.5" viewBox="0 0 9.5 5.5"><path d="M.5.5L4.75 4.9 9 .5" fill="none" stroke="#343741" stroke-width="1.1"/></svg>
<svg class="a" style="left:1725.5px;top:384px" width="9.5" height="5.5" viewBox="0 0 9.5 5.5"><path d="M.5.5L4.75 4.9 9 .5" fill="none" stroke="#343741" stroke-width="1.1"/></svg>
<svg class="a" style="left:1896.5px;top:384px" width="9.5" height="5.5" viewBox="0 0 9.5 5.5"><path d="M.5.5L4.75 4.9 9 .5" fill="none" stroke="#343741" stroke-width="1.1"/></svg>
<div class="a" style="left:309px;top:1039px;width:1603px;height:1px;background:#d3dae6"></div>
<div class="a" style="left:309px;top:1040px;width:1602px;height:32px;background:#fff;border-radius:0 0 6px 6px"></div>
<div class="a t" style="left:316.6px;top:1047px;font-size:11.4px;color:#343741">Rows per page: 100</div>
<svg class="a" style="left:426px;top:1055.2px" width="9" height="5.2" viewBox="0 0 9 5.2"><path d="M.5.5L4.5 4.6 8.5.5" fill="none" stroke="#343741" stroke-width="1.1"/></svg>
<svg class="a" style="left:1856px;top:1051.3px" width="7" height="11.5" viewBox="0 0 7 11.5"><path d="M6.3.5L1 5.75l5.3 5.25" fill="none" stroke="#98a2b3" stroke-width="1"/></svg>
<div class="a t" style="left:1877px;top:1049px;font-size:11.4px;color:#0b64b0;font-weight:bold;text-decoration:underline;text-underline-offset:1.5px">1</div>
<svg class="a" style="left:1897.5px;top:1051.3px" width="7" height="11.5" viewBox="0 0 7 11.5"><path d="M.7.5L6 5.75.7 11" fill="none" stroke="#98a2b3" stroke-width="1"/></svg>
</body></html>
